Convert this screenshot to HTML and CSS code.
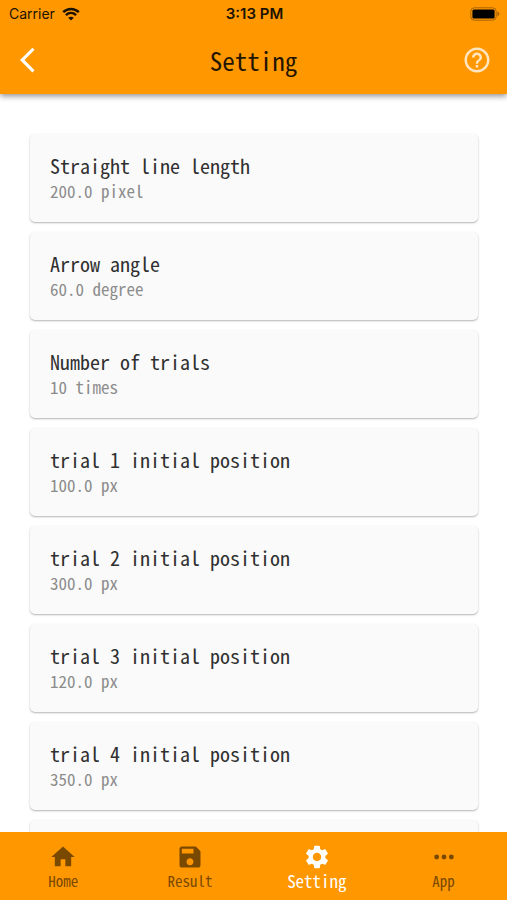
FILE: index.html
```html
<!DOCTYPE html>
<html lang="en">
<head>
<meta charset="utf-8">
<meta name="viewport" content="width=device-width, initial-scale=1">
<title>Setting</title>
<link rel="stylesheet" href="styles.css">
</head>
<body>
<div class="app">
  <header class="top">
    <div class="status">
      <div class="carrier">
        <span>Carrier</span>
        <svg class="wifi" viewBox="0 0 18 14" aria-hidden="true">
          <path d="M1.2 5.2C5.6.9 12.4.9 16.8 5.2" />
          <path d="M3.9 8.1c3-2.8 7.2-2.8 10.2 0" />
          <path class="wifi-dot" d="M9 13.6 6.2 10.7c1.6-1.4 4-1.4 5.6 0z" />
        </svg>
      </div>
      <span class="time">3:13 PM</span>
      <svg class="battery" viewBox="0 0 30 14" aria-hidden="true">
        <rect class="battery-case" x=".8" y=".8" width="25.4" height="12.4" rx="3.6" />
        <rect x="2.4" y="2.4" width="22.2" height="9.2" rx="1.5" />
        <path class="battery-tip" d="M27.4 4.6c2.6 1 2.6 3.8 0 4.8z" />
      </svg>
    </div>
    <div class="bar">
      <button class="icon-button" type="button" aria-label="Back">
        <svg class="back" viewBox="0 0 24 24"><path d="M11.67 3.87 9.9 2.1 0 12l9.9 9.9 1.77-1.77L3.54 12z" /></svg>
      </button>
      <h1>Setting</h1>
      <button class="icon-button help-button" type="button" aria-label="Help">
        <svg class="help" viewBox="0 0 24 24"><path d="M11 18h2v-2h-2v2zm1-16C6.48 2 2 6.48 2 12s4.480 10 10 10 10-4.480 10-10S17.520 2 12 2zm0 18c-4.410 0-8-3.590-8-8s3.590-8 8-8 8 3.590 8 8-3.590 8-8 8zm0-14c-2.210 0-4 1.790-4 4h2c0-1.100.9-2 2-2s2 .9 2 2c0 2-3 1.750-3 5h2c0-2.250 3-2.500 3-5 0-2.210-1.790-4-4-4z" /></svg>
      </button>
    </div>
  </header>
  <main>
    <ul class="cards">
      <li class="card"><h2>Straight line length</h2><p>200.0 pixel</p></li>
      <li class="card"><h2>Arrow angle</h2><p>60.0 degree</p></li>
      <li class="card"><h2>Number of trials</h2><p>10 times</p></li>
      <li class="card"><h2>trial 1 initial position</h2><p>100.0 px</p></li>
      <li class="card"><h2>trial 2 initial position</h2><p>300.0 px</p></li>
      <li class="card"><h2>trial 3 initial position</h2><p>120.0 px</p></li>
      <li class="card"><h2>trial 4 initial position</h2><p>350.0 px</p></li>
      <li class="card"></li>
    </ul>
  </main>
  <nav class="tabs">
    <a class="tab" href="#home">
      <svg viewBox="0 0 24 24" aria-hidden="true"><path d="M10 20v-6h4v6h5v-8h3L12 3 2 12h3v8z" /></svg>
      <span>Home</span>
    </a>
    <a class="tab" href="#result">
      <svg viewBox="0 0 24 24" aria-hidden="true"><path d="M17 3H5c-1.110 0-2 .9-2 2v14c0 1.100.890 2 2 2h14c1.100 0 2-.9 2-2V7l-4-4zm-5 16c-1.660 0-3-1.340-3-3s1.340-3 3-3 3 1.340 3 3-1.340 3-3 3zm3-10H5V5h10v4z" /></svg>
      <span>Result</span>
    </a>
    <a class="tab tab-active" href="#setting" aria-current="page">
      <svg viewBox="0 0 24 24" aria-hidden="true"><path d="M19.140 12.940c.040-.3.060-.610.060-.940 0-.320-.020-.640-.070-.940l2.030-1.580c.180-.140.230-.410.120-.610l-1.920-3.320c-.120-.220-.370-.290-.590-.220l-2.390.960c-.5-.380-1.030-.7-1.620-.940l-.360-2.540c-.040-.240-.240-.410-.480-.410h-3.840c-.240 0-.430.170-.470.410l-.360 2.540c-.590.240-1.130.570-1.620.940l-2.390-.960c-.220-.080-.470 0-.590.220L2.740 8.870c-.120.210-.080.470.120.610l2.030 1.580c-.050.3-.090.630-.090.940s.020.640.070.940l-2.030 1.580c-.180.140-.230.410-.120.610l1.920 3.320c.120.220.370.290.590.220l2.390-.960c.5.380 1.030.7 1.620.940l.360 2.540c.050.240.240.410.480.410h3.840c.240 0 .440-.170.470-.410l.360-2.540c.590-.240 1.130-.560 1.620-.940l2.390.960c.220.080.470 0 .590-.220l1.920-3.320c.120-.220.070-.470-.120-.610l-2.010-1.580zM12 15.600c-1.980 0-3.600-1.620-3.600-3.600s1.620-3.600 3.600-3.600 3.600 1.620 3.600 3.600-1.620 3.600-3.600 3.600z" /></svg>
      <span>Setting</span>
    </a>
    <a class="tab" href="#app">
      <svg viewBox="0 0 24 24" aria-hidden="true"><circle cx="5.700" cy="12" r="2.100" /><circle cx="12" cy="12" r="2.100" /><circle cx="18.300" cy="12" r="2.100" /></svg>
      <span>App</span>
    </a>
  </nav>
</div>
</body>
</html>
```
FILE: styles.css
```css
* {
  box-sizing: border-box;
}

body,
h1,
h2,
p,
ul {
  margin: 0;
  padding: 0;
  font-weight: 400;
}

body {
  background: #fff;
  font-family: "Noto Sans Mono CJK JP", "Noto Sans CJK JP", monospace;
  color: #303030;
}

svg {
  display: block;
  flex: none;
  fill: currentColor;
}

.app {
  display: flex;
  flex-direction: column;
  height: 100vh;
}

.top {
  z-index: 1;
  padding-bottom: 8px;
  background: #ff9800;
  box-shadow: 0 2px 6px rgba(0, 0, 0, 0.45);
}

.status {
  display: grid;
  grid-template-columns: 1fr auto 1fr;
  align-items: center;
  height: 27px;
  padding: 0 7px 0 9px;
  font-family: Inter, "Liberation Sans", sans-serif;
  font-size: 14px;
  color: #1c1200;
}

.carrier {
  display: flex;
  align-items: center;
  gap: 7px;
}

.wifi {
  width: 18px;
  height: 14px;
  fill: none;
  stroke: currentColor;
  stroke-width: 2.5;
}

.wifi-dot {
  fill: currentColor;
  stroke: none;
}

.time {
  font-size: 15px;
  font-weight: 600;
}

.battery {
  justify-self: end;
  width: 30px;
  height: 14px;
  fill: #000;
}

.battery-case {
  fill: none;
  stroke: #a86400;
}

.battery-tip {
  fill: #a86400;
}

.bar {
  display: grid;
  grid-template-columns: 60px 1fr 60px;
  align-items: center;
  height: 59px;
  padding-top: 6px;
}

.icon-button {
  display: flex;
  padding: 0 0 0 20px;
  border: 0;
  background: none;
  color: #fff;
}

.help-button {
  justify-content: flex-end;
  padding: 0 15px 0 0;
  color: #ffe6c0;
}

.back,
.help {
  width: 30px;
  height: 30px;
}

h1 {
  font-size: 25px;
  line-height: 36px;
  text-align: center;
  color: #241500;
}

main {
  flex: 1;
  min-height: 0;
  overflow: auto;
  scrollbar-width: none;
  padding: 40px 29px 0 30px;
}

.cards {
  display: flex;
  flex-direction: column;
  gap: 10px;
  list-style: none;
}

.card {
  flex: none;
  min-height: 88px;
  padding: 18px 20px;
  border-radius: 5px;
  background: #fafafa;
  box-shadow: 0 1px 2px rgba(0, 0, 0, 0.3);
}

h2 {
  font-size: 20px;
  line-height: 27px;
}

.card p {
  font-size: 17px;
  line-height: 24px;
  color: #8c8c8c;
}

.tabs {
  z-index: 1;
  display: grid;
  grid-template-columns: repeat(4, 1fr);
  height: 68px;
  background: #ff9800;
}

.tab {
  display: flex;
  flex-direction: column;
  align-items: center;
  padding-top: 11px;
  font-size: 15px;
  line-height: 20px;
  color: #7a4900;
  text-decoration: none;
}

.tab svg {
  width: 28px;
  height: 28px;
}

.tab-active {
  font-size: 17px;
  color: #fff;
}
```
